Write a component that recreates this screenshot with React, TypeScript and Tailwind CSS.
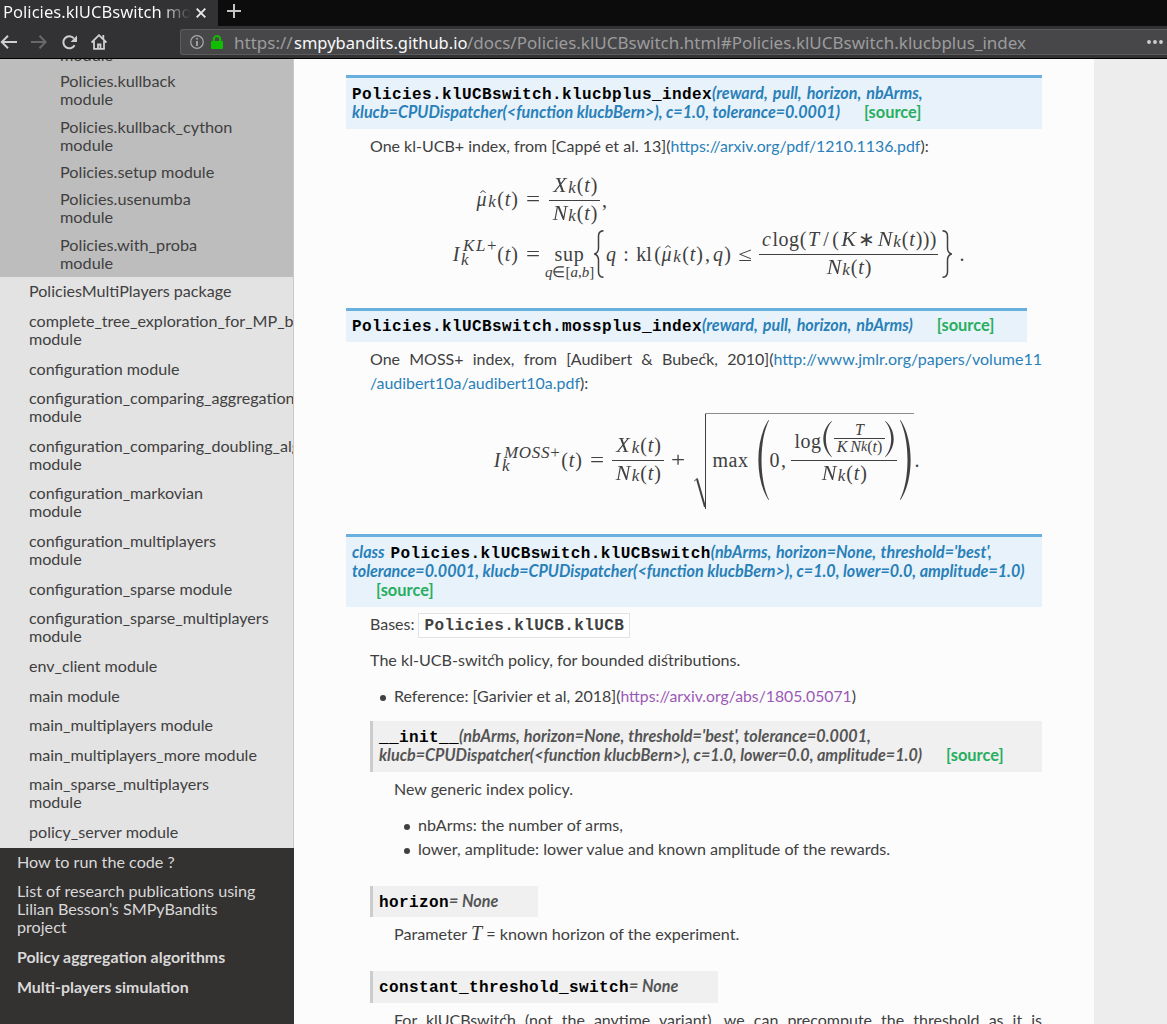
import type { ReactNode } from 'react';

const policyModules: string[][] = [
  ['Policies.kullback', 'module'],
  ['Policies.kullback_cython', 'module'],
  ['Policies.setup module'],
  ['Policies.usenumba', 'module'],
  ['Policies.with_proba', 'module'],
];

const packageModules: string[][] = [
  ['PoliciesMultiPlayers package'],
  ['complete_tree_exploration_for_MP_bandits', 'module'],
  ['configuration module'],
  ['configuration_comparing_aggregation_algorithms', 'module'],
  ['configuration_comparing_doubling_algorithms', 'module'],
  ['configuration_markovian', 'module'],
  ['configuration_multiplayers', 'module'],
  ['configuration_sparse module'],
  ['configuration_sparse_multiplayers', 'module'],
  ['env_client module'],
  ['main module'],
  ['main_multiplayers module'],
  ['main_multiplayers_more module'],
  ['main_sparse_multiplayers', 'module'],
  ['policy_server module'],
];

const topLinks: { lines: string[]; strong?: boolean }[] = [
  { lines: ['How to run the code ?'] },
  { lines: ['List of research publications using', 'Lilian Besson’s SMPyBandits', 'project'] },
  { lines: ['Policy aggregation algorithms'], strong: true },
  { lines: ['Multi-players simulation'], strong: true },
];

function Lines({ lines }: { lines: string[] }) {
  return (
    <>
      {lines.map((l) => (
        <span key={l} className="block">{l}</span>
      ))}
    </>
  );
}

function Browser() {
  return (
    <header className="h-[59px] shrink-0 border-b border-black bg-[#323234] font-['Noto_Sans',sans-serif] whitespace-nowrap">
      <div className="flex h-[26px] bg-[#0c0c0c]">
        <div className="flex w-[218px] items-center bg-[#323234] pl-[3px] text-white">
          <span className="-mt-[2px] w-[188px] overflow-hidden bg-linear-to-r from-white from-84% to-[#323234] bg-clip-text text-[16.600px] leading-6 text-transparent">
            Policies.klUCBswitch module
          </span>
          <svg className="-mt-px ml-[5px] h-[10px] w-[10px]" viewBox="0 0 10 10" fill="none" stroke="#e8e8e8" strokeWidth="1.9">
            <path d="M.7.7l8.6 8.6M9.3.7L.7 9.3" />
          </svg>
        </div>
        <svg className="mt-1 ml-[9px] h-[14px] w-[14px]" viewBox="0 0 14 14" stroke="#c4c4c5" strokeWidth="2">
          <path d="M7 0v14M0 7h14" />
        </svg>
      </div>
      <div className="flex h-8 items-center">
        <svg className="h-[14px] w-[17px]" viewBox="0 0 17 14" fill="none" stroke="#cfcfd0" strokeWidth="2">
          <path d="M17 7H2M8 .8L1.8 7L8 13.2" />
        </svg>
        <svg className="ml-[14px] h-[14px] w-4" viewBox="0 0 16 14" fill="none" stroke="#69696b" strokeWidth="2">
          <path d="M0 7h14.5M8.5.8L14.7 7l-6.200 6.200" />
        </svg>
        <svg className="ml-[15px] h-[15px] w-[15px]" viewBox="0 0 15 15" fill="none" stroke="#cfcfd0" strokeWidth="2">
          <path d="M12.600 10.200A6 6 0 1 1 11.900 3.400" />
          <path d="M15 .5V7H8.500z" fill="#cfcfd0" stroke="none" />
        </svg>
        <svg className="ml-[14px] h-4 w-4" viewBox="0 0 16 16" fill="none" stroke="#cfcfd0" strokeWidth="1.800">
          <path d="M.6 8.500L8 1.200l7.400 7.300M3 7v7.800h10V7" />
          <path d="M7 14v-3.500h2.500V14M12.300 1v4" />
        </svg>
        <div className="ml-[73px] flex h-[26px] grow items-center rounded-l-[3px] border border-r-0 border-[#5c5c5e] bg-[#474749] pl-[9px]">
          <svg className="h-[14px] w-[14px]" viewBox="0 0 14 14" fill="none" stroke="#a9a9aa" strokeWidth="1.200">
            <circle cx="7" cy="7" r="6.300" />
            <path d="M7 6v5M7 3v1.600" strokeWidth="1.800" />
          </svg>
          <svg className="ml-[7px] h-[14px] w-3" viewBox="0 0 12 14">
            <rect y="6" width="12" height="8" rx="1" fill="#12bc00" />
            <path d="M2.800 7V4.200a3.200 3.200 0 0 1 6.400 0V7" fill="none" stroke="#12bc00" strokeWidth="2" />
          </svg>
          <div className="mt-[2px] ml-[11px] flex text-[17px] leading-6 text-[#9c9c9d]">
            <span className="w-[60px]">https://</span>
            <span className="w-[173px] text-[16.500px] text-[#f9f9fa]">smpybandits.github.io</span>
            <span>/docs/Policies.klUCBswitch.html#Policies.klUCBswitch.klucbplus_index</span>
          </div>
          <svg className="mr-[4px] ml-auto h-1 w-4" viewBox="0 0 16 4" fill="#cfcfd0">
            <circle cx="2" cy="2" r="1.900" />
            <circle cx="8" cy="2" r="1.900" />
            <circle cx="14" cy="2" r="1.900" />
          </svg>
        </div>
      </div>
    </header>
  );
}

function Sidebar() {
  return (
    <nav className="flex w-[294px] shrink-0 flex-col overflow-hidden bg-[#343131] text-[16.100px] leading-[18px] whitespace-nowrap text-[#404040]">
      <ul className="border-r border-[#c9c9c9] bg-[#bdbdbd] pl-[60px] text-[16.250px]">
        <li className="flex h-[9.100px] items-end overflow-hidden pb-[4px]">module</li>
        {policyModules.map((m) => (
          <li key={m[0]} className="pt-[4.100px] pb-[5.340px]"><Lines lines={m} /></li>
        ))}
      </ul>
      <ul className="overflow-hidden border-r border-[#c9c9c9] bg-[#e3e3e3] pl-[29px]">
        {packageModules.map((m) => (
          <li key={m[0]} className="pt-[5.100px] pb-[6.540px]"><Lines lines={m} /></li>
        ))}
      </ul>
      <ul className="pl-[17px] text-[#d9d9d9]">
        {topLinks.map((m) => (
          <li key={m.lines[0]} className={m.strong ? 'pt-[5.300px] pb-[6.340px] text-[15.900px] font-bold' : 'pt-[5.100px] pb-[6.540px] text-[16.150px]'}><Lines lines={m.lines} /></li>
        ))}
      </ul>
    </nav>
  );
}

/* One math glyph or run, set in a box of a given advance width. */
function G({ c, children }: { c: string; children: ReactNode }) {
  return <span className={`flex h-6 shrink-0 justify-center whitespace-pre ${c}`}>{children}</span>;
}

function Frac({ c, top, bottom }: { c: string; top: ReactNode; bottom: ReactNode }) {
  return (
    <span className={`flex shrink-0 flex-col items-center ${c}`}>
      <span className="flex h-7 shrink-0 pt-px">{top}</span>
      <span className="h-px w-full shrink-0 bg-[#404040]" />
      <span className="flex shrink-0">{bottom}</span>
    </span>
  );
}

function OfT() {
  return (
    <>
      <G c="w-[7px]">(</G>
      <G c="w-[7px] italic">t</G>
      <G c="w-[7px]">)</G>
    </>
  );
}

function OfK({ name }: { name: string }) {
  return (
    <span className="flex">
      <G c="w-[16px] scale-x-110 italic">{name}</G>
      <G c="w-[9px] pt-[3px] text-[17px] italic">k</G>
      <OfT />
    </span>
  );
}

function MuK() {
  return (
    <>
      <span className="relative flex h-6 w-[11px] shrink-0 justify-center italic">
        μ
        <svg className="absolute top-[3px] left-[4px] h-[3px] w-[6px]" viewBox="0 0 6 3" fill="none" stroke="#404040">
          <path d="M.3 2.800L3 .6l2.700 2.200" />
        </svg>
      </span>
      <G c="w-[10px] pt-[3px] text-[17px] italic">k</G>
      <OfT />
    </>
  );
}

function Equals() {
  return <G c="mx-[7px] w-4 scale-x-125">=</G>;
}

function BigParen({ c, flip }: { c: string; flip?: boolean }) {
  return (
    <svg className={`shrink-0 ${c} ${flip ? '-scale-x-100' : ''}`} viewBox="0 0 11 80" preserveAspectRatio="none" fill="#404040">
      <path d="M10.500 0C-3 20-3 60 10.500 80l.5-.6C1 60 1 20 11 .6z" />
    </svg>
  );
}

function Brace({ c }: { c: string }) {
  return (
    <svg className={`h-12 w-[10px] shrink-0 ${c}`} viewBox="0 0 10 48" fill="none" stroke="#404040" strokeWidth="1.500">
      <path d="M9.500.7C6 1 4.500 3 4.500 6v12c0 3-1 5-4 6c3 1 4 3 4 6v12c0 3 1.500 5 5 5.300" />
    </svg>
  );
}

function IndexFormula() {
  return (
    <div className="mt-px flex h-[125px] flex-col font-['Liberation_Serif',serif] text-[20px] leading-6">
      <div className="ml-[130px] flex h-[60px] shrink-0">
        <span className="mt-[28px] flex"><MuK /><Equals /></span>
        <Frac c="w-[51px] mt-[13px] ml-px" top={<OfK name="X" />} bottom={<OfK name="N" />} />
        <G c="mt-[29px] w-[9px]">,</G>
      </div>
      <div className="ml-[105px] flex">
        <span className="mt-[23px] flex">
          <G c="w-[10px] italic">I</G>
          <span className="-mt-[4px] flex w-[36px] shrink-0 flex-col text-[17px] leading-4 italic">
            <span className="ml-[2px] flex h-[14px] tracking-[1.600px]">KL<i className="not-italic">+</i></span>
            <span className="h-4">k</span>
          </span>
          <OfT />
          <Equals />
        </span>
        <span className="mt-[23px] -ml-[2px] flex w-[47px] shrink-0 flex-col items-center">
          <G c="tracking-[0.800px]">sup</G>
          <span className="-mt-[3px] text-[15px] leading-[18px]"><i>q</i>∈[<i>a</i>,<i>b</i>]</span>
        </span>
        <Brace c="mt-[11px] ml-[1px]" />
        <span className="mt-[23px] flex">
          <G c="w-[14px] italic">q</G>
          <G c="w-[16px]">:</G>
          <G c="w-[20px]">kl</G>
          <G c="w-[7px]">(</G>
          <MuK />
          <G c="w-[9px]">,</G>
          <G c="w-[12px] italic">q</G>
          <G c="w-[7px]">)</G>
          <G c="mx-[6px] w-4 scale-x-125">≤</G>
        </span>
        <Frac
          c="w-[179px] mt-[7px]"
          top={
            <span className="flex">
              <G c="w-[12px] italic">c</G>
              <G c="w-[27px] tracking-[0.400px]">log</G>
              <G c="w-[7px]">(</G>
              <G c="w-[14px] italic">T</G>
              <G c="w-[11px]">/</G>
              <G c="w-[8px]">(</G>
              <G c="w-[17px] scale-x-110 italic">K</G>
              <G c="w-[20px]">∗</G>
              <OfK name="N" />
              <G c="w-[7px]">)</G>
              <G c="w-[7px]">)</G>
            </span>
          }
          bottom={<OfK name="N" />}
        />
        <Brace c="mt-[11px] ml-[4px] -scale-x-100" />
        <G c="mt-[23px] ml-[7px] w-[6px]">.</G>
      </div>
    </div>
  );
}

function MossFormula() {
  return (
    <div className="mt-px ml-[146px] flex h-[111px] font-['Liberation_Serif',serif] text-[20px] leading-6">
      <span className="mt-[52px] flex">
        <G c="w-[10px] italic">I</G>
        <span className="-mt-[3px] flex w-[59px] shrink-0 flex-col text-[17px] leading-4 italic">
          <span className="ml-[2px] flex h-[13px] tracking-[0.700px]">MOSS<i className="not-italic">+</i></span>
          <span className="h-4">k</span>
        </span>
        <OfT />
        <Equals />
      </span>
      <Frac c="w-[52px] mt-[36px]" top={<OfK name="X" />} bottom={<OfK name="N" />} />
      <G c="mt-[52px] ml-[5px] w-[18px] scale-x-125">+</G>
      <svg className="mt-[17px] ml-[7px] h-[97px] w-[12px] shrink-0" viewBox="0 0 12 97" fill="none" stroke="#404040">
        <path d="M0 68.500L3.500 65" />
        <path d="M3 66l8 28" strokeWidth="2" />
        <path d="M11.500 96V.5" />
      </svg>
      <span className="mt-[17px] flex h-[95px] w-[208px] shrink-0 border-t border-[#8c8c8c]">
        <G c="mt-[34px] ml-[5px] w-[39px] tracking-[0.500px]">max</G>
        <BigParen c="mt-[6px] ml-2 h-20 w-[11px]" />
        <G c="mt-[34px] w-[11px]">0</G>
        <G c="mt-[34px] w-[7px]">,</G>
        <Frac
          c="mt-[18px] ml-[4px] w-[106px]"
          top={
            <span className="flex">
              <G c="-mt-[4px] w-[28px] tracking-[0.400px]">log</G>
              <BigParen c="-mt-3 ml-[1px] h-9 w-[9px]" />
              <span className="-mt-[11px] ml-[2px] flex h-8 w-[51px] shrink-0 flex-col items-center text-[16px] leading-4 italic">
                <span className="h-4">T</span>
                <span className="h-px w-full shrink-0 bg-[#404040]" />
                <span className="flex"><span className="mr-[3px]">K</span>N<span className="text-[14px]">k</span><span className="not-italic">(</span>t<span className="not-italic">)</span></span>
              </span>
              <BigParen c="-mt-3 h-9 w-[9px]" flip />
            </span>
          }
          bottom={<OfK name="N" />}
        />
        <BigParen c="mt-[6px] ml-[3px] h-20 w-[11px]" flip />
      </span>
      <G c="mt-[52px] w-[6px]">.</G>
    </div>
  );
}

function Name({ children }: { children: ReactNode }) {
  return <code className="font-['Liberation_Mono',monospace] text-[16px] font-bold tracking-[0.400px] text-black not-italic">{children}</code>;
}

function Source() {
  return <span className="ml-6 text-[16.400px] text-[#27ae60] not-italic">[source]</span>;
}

function SigLine({ children }: { children: ReactNode }) {
  return <div className="h-[19px]">{children}</div>;
}

function Item({ children }: { children: ReactNode }) {
  return (
    <li className="flex items-center">
      <span className="mt-[3px] mr-2 ml-[10px] h-[6px] w-[6px] shrink-0 rounded-full bg-[#404040]" />
      <span>{children}</span>
    </li>
  );
}

const sigBlue =
  'border-t-[3px] border-[#6ab0de] bg-[#e7f2fa] px-[6px] pt-[5px] text-[16.120px] leading-[19px] font-bold italic whitespace-nowrap text-[#2980b9]';
const sigGray =
  'border-l-[3px] border-[#ccc] bg-[#f0f0f0] px-[6px] pt-[5px] text-[16.150px] leading-[19px] font-bold italic whitespace-nowrap text-[#555]';

function Article() {
  return (
    <main className="w-[800px] shrink-0 bg-[#fcfcfc] pt-[17px] pr-[52px] pl-[52px] text-[16px] leading-6 text-[#404040]">
      <div className={`${sigBlue} -mt-px h-[54px]`}>
        <SigLine><Name>Policies.klUCBswitch.klucbplus_index</Name><span className="[word-spacing:1.500px]">(reward, pull, horizon, nbArms,</span></SigLine>
        <SigLine>klucb=CPUDispatcher(&lt;function klucbBern&gt;), c=1.0, tolerance=0.0001)<Source /></SigLine>
      </div>
      <p className="mt-[5px] ml-6">One kl-UCB+ index, from [Cappé et al. 13](<a className="text-[15.850px] text-[#2980b9]">https://arxiv.org/pdf/1210.1136.pdf</a>):</p>
      <IndexFormula />

      <div className={`${sigBlue} mt-6 h-[34px] w-[681px]`}>
        <SigLine><div className="-mt-px"><Name>Policies.klUCBswitch.mossplus_index</Name><span className="[word-spacing:1.500px]">(reward, pull, horizon, nbArms)</span><Source /></div></SigLine>
      </div>
      <div className="mt-[5px] ml-6 whitespace-nowrap">
        <p className="[font-variant-ligatures:discretionary-ligatures] [text-align-last:justify]">One MOSS+ index, from [Audibert &amp; Bubeck, 2010](<a className="text-[#2980b9]">http://www.jmlr.org/papers/volume11</a></p>
        <p><a className="text-[15.950px] text-[#2980b9]">/audibert10a/audibert10a.pdf</a>):</p>
      </div>
      <MossFormula />

      <div className={`${sigBlue} mt-[27px] h-[73px]`}>
        <SigLine><span className="mr-[6px] font-bold">class</span><Name>Policies.klUCBswitch.klUCBswitch</Name><span className="[word-spacing:1px]">(nbArms, horizon=None, threshold='best',</span></SigLine>
        <SigLine>tolerance=0.0001, klucb=CPUDispatcher(&lt;function klucbBern&gt;), c=1.0, lower=0.0, amplitude=1.0)</SigLine>
        <SigLine><Source /></SigLine>
      </div>
      <div className="ml-6">
        <p className="mt-[6px] flex h-[25px] items-center">
          <span className="-mt-[3px]">Bases:</span>
          <code className="ml-1 flex h-[25px] items-center border border-[#e1e4e5] bg-white px-[5px] font-['Liberation_Mono',monospace] text-[16px] font-bold tracking-[0.380px]">Policies.klUCB.klUCB</code>
        </p>
        <p className="mt-[10px] text-[16.120px] [font-variant-ligatures:discretionary-ligatures]">The kl-UCB-switch policy, for bounded distributions.</p>
        <ul className="mt-3">
          <Item>Reference: [Garivier et al, 2018](<a className="text-[15.750px] text-[#9b59b6]">https://arxiv.org/abs/1805.05071</a>)</Item>
        </ul>
        <div className={`${sigGray} mt-[13px] h-[51px]`}>
          <SigLine><Name>__init__</Name><span className="[word-spacing:0.500px]">(nbArms, horizon=None, threshold='best', tolerance=0.0001,</span></SigLine>
          <SigLine>klucb=CPUDispatcher(&lt;function klucbBern&gt;), c=1.0, lower=0.0, amplitude=1.0)<Source /></SigLine>
        </div>
        <p className="mt-[5px] ml-6">New generic index policy.</p>
        <ul className="mt-3 ml-6 text-[16.130px]">
          <Item>nbArms: the number of arms,</Item>
          <Item>lower, amplitude: lower value and known amplitude of the rewards.</Item>
        </ul>
        <div className={`${sigGray} mt-[25px] h-[31px] w-[168px]`}><SigLine><Name>horizon</Name>= None</SigLine></div>
        <p className="mt-[5px] ml-6 h-6 text-[16.170px]">Parameter <i className="font-['Liberation_Serif',serif] text-[20px] leading-none">T</i> = known horizon of the experiment.</p>
        <div className={`${sigGray} mt-[25px] h-8 w-[348px]`}><SigLine><Name>constant_threshold_switch</Name>= None</SigLine></div>
        <p className="mt-[5px] ml-6 whitespace-nowrap [font-variant-ligatures:discretionary-ligatures] [text-align-last:justify]">For klUCBswitch (not the anytime variant), we can precompute the threshold as it is</p>
      </div>
    </main>
  );
}

export default function App() {
  return (
    <div className="flex h-[1024px] w-[1167px] flex-col overflow-hidden bg-[#ededed] font-['Lato',sans-serif]">
      <Browser />
      <div className="flex min-h-0 grow overflow-hidden">
        <Sidebar />
        <Article />
      </div>
    </div>
  );
}
